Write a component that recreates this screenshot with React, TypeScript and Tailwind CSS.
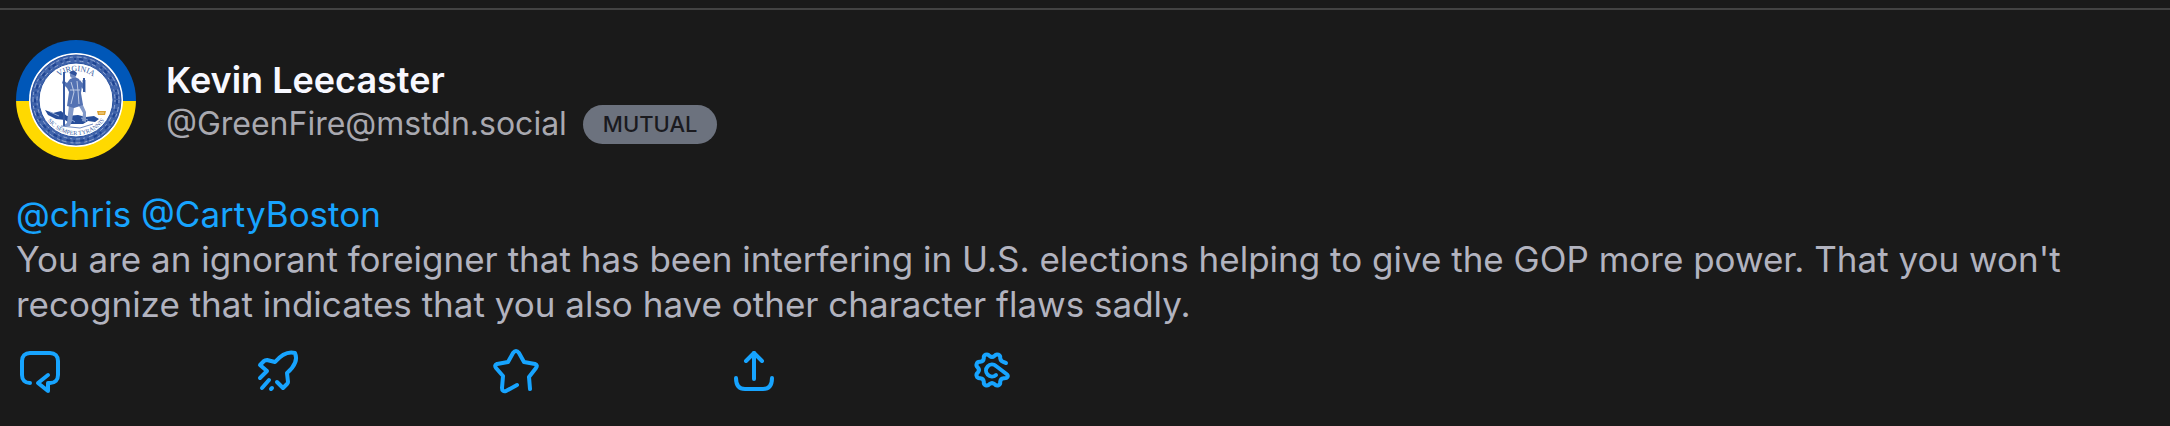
import React from 'react';

const actions = [
  {
    label: 'Reply',
    paths: ['M14 36C9 36 6 33 6 28V14C6 9 9 6 14 6H34C39 6 42 9 42 14V28C42 33 39 36 34 36H32V44L22 36L32 28'],
  },
  {
    label: 'Boost',
    paths: [
      'M6 31L13 24L6 18L10 14Q11 13 13 13L21 15C27 8 34 4 41 6C44 13 40 20 33 26L34 35Q34 36 33 37L29 41L23 35',
      'M8 41L15 33',
      'M17 42L18 41',
    ],
  },
  {
    label: 'Favourite',
    paths: [
      'M38 42L37 30L44 21Q46 18 43 17L32 15L27 6Q24 2 21 6L16 15L5 17Q2 18 4 21L11 29L10 41Q10 45 14 44L25 38',
    ],
  },
  {
    label: 'Share',
    paths: ['M24 32V6', 'M16 14L24 6L32 14', 'M6 31C6 38 9 42 15 42H33C39 42 42 38 42 31'],
  },
  {
    label: 'More',
    paths: [
      'M38 16Q32.5 14.5 32.2 11.3C32.7 7.7 28.7 6.1 26.4 8.9Q24 11 21.6 8.9C19.3 6.1 15.3 7.7 15.8 11.3Q15.5 14.5 12.3 14.8C8.7 14.3 7.1 18.3 9.9 20.6Q12 23 9.9 25.4C7.1 27.7 8.7 31.7 12.3 31.2Q15.5 31.5 15.8 34.7C15.3 38.3 19.3 39.9 21.6 37.1Q24 35 26.4 37.1C28.7 39.9 32.7 38.3 32.2 34.7Q32.5 31.5 35.7 31.2C39.3 31.7 41 29 38.5 27L28 19A6 6 0 1 0 28 28',
    ],
  },
];

const Avatar = () => (
  <svg className="size-30 shrink-0" viewBox="0 0 120 120" role="img" aria-label="Kevin Leecaster">
    <defs>
      <clipPath id="round">
        <circle cx="60" cy="60" r="60" />
      </clipPath>
      <path id="arcTop" d="M31 60A29 29 0 0 1 89 60" />
      <path id="arcBottom" d="M25 60A35 35 0 0 0 95 60" />
    </defs>
    <g clipPath="url(#round)">
      <rect width="120" height="61" fill="#0057b8" />
      <rect y="61" width="120" height="59" fill="#ffd900" />
    </g>
    <circle cx="60" cy="60" r="47" fill="#fff" />
    {/* seal border */}
    <circle cx="60" cy="60" r="41" fill="none" stroke="#3f63aa" strokeWidth="8" />
    <circle cx="60" cy="60" r="43" fill="none" stroke="#8fa6d4" strokeWidth="1" strokeDasharray="3 4 5 2" />
    <circle cx="60" cy="60" r="39" fill="none" stroke="#8fa6d4" strokeWidth="1" strokeDasharray="2 3 4 4" />
    <circle cx="60" cy="60" r="41" fill="none" stroke="#1d4392" strokeWidth="2" strokeDasharray="4 5 2 3" />
    <circle cx="60" cy="60" r="45" fill="none" stroke="#27509f" />
    <circle cx="60" cy="60" r="37" fill="none" stroke="#27509f" />
    <text fill="#3c5fa5" fontSize="8" fontFamily="Liberation Serif, serif">
      <textPath href="#arcTop" startOffset="50%" textAnchor="middle">VIRGINIA</textPath>
    </text>
    <text fill="#3c5fa5" fontSize="6" fontFamily="Liberation Serif, serif">
      <textPath href="#arcBottom" startOffset="50%" textAnchor="middle">SIC SEMPER TYRANNIS</textPath>
    </text>
    {/* fallen figure */}
    <path d="M29 70L37 73L45 71L51 76L62 75L70 77L78 76L83 79L79 82L72 81L67 84L55 84L49 80L40 79L32 75Z" fill="#264d99" />
    <path d="M34 72L43 76M53 78L59 82M65 78L72 80" stroke="#92a9d5" strokeWidth="1" />
    {/* standing figure */}
    <path d="M53 65L51 83L47 86H54L56 81L58 67L63 66L67 73L66 81L70 82L70 72L66 63Z" fill="#8098c9" />
    <path d="M54 39L51 43L47 40L46 43L51 48L53 52L51 66L58 68L67 65L65 53L66 46L63 39L59 37Z" fill="#5372b3" />
    <path d="M55 42L58 52L55 64M61 41L62 51L63 64M54 50H64" stroke="#bdcae4" strokeWidth="1" fill="none" />
    <circle cx="57" cy="35" r="3" fill="#6d88bf" />
    <path d="M53 33Q57 28 61 33L60 36Z" fill="#2e519b" />
    <path d="M63 41L68 48L68 40" fill="none" stroke="#5372b3" strokeWidth="3" />
    <path d="M68 38V52" stroke="#3659a1" strokeWidth="2" />
    <path d="M48 32V86" stroke="#3659a1" strokeWidth="2" />
    <path d="M45 86L64 88L77 84" stroke="#718cc2" fill="none" />
    <path d="M81 71H90L89 75H82Z" fill="#dca12f" />
    <path d="M83 73H88" stroke="#f6dda1" />
  </svg>
);

const App = () => {
  return (
    <div className="min-h-screen bg-[#1a1a1a] pt-2 font-['Inter','Liberation_Sans',sans-serif] text-[#b2b3bf]">
      <article className="border-t-2 border-[#434343] px-4 pt-[30px] pb-6">
        <header className="flex items-center gap-[30px]">
          <Avatar />
          <div className="flex flex-col pt-1">
            <h2 className="text-[36px] leading-[44px] font-semibold text-[#f7f8ff]">Kevin Leecaster</h2>
            <div className="flex items-center gap-4">
              <span className="text-[32px] leading-[44px] text-[#a9a9b0]">@GreenFire@mstdn.social</span>
              <span className="rounded-full bg-[#6c727e] px-5 text-[22px] leading-[39px] font-medium text-[#1a1a1f]">
                MUTUAL
              </span>
            </div>
          </div>
        </header>

        <div className="mt-8 text-[35px] leading-[45px]">
          <p className="text-[#17a4ff]">
            <a href="#chris">@chris</a> <a href="#cartyboston">@CartyBoston</a>
          </p>
          <p>
            You are an ignorant foreigner that has been interfering in U.S. elections helping to give the GOP more
            power. That you won't recognize that indicates that you also have other character flaws sadly.
          </p>
        </div>

        <div className="mt-5 flex gap-[190px]">
          {actions.map((action) => (
            <button key={action.label} type="button" aria-label={action.label} className="text-[#17a4ff]">
              <svg className="size-12" viewBox="0 0 48 48" fill="none" stroke="currentColor" strokeWidth="4" strokeLinecap="round" strokeLinejoin="round">
                {action.paths.map((d) => (
                  <path key={d} d={d} />
                ))}
              </svg>
            </button>
          ))}
        </div>
      </article>
    </div>
  );
};

export default App;
